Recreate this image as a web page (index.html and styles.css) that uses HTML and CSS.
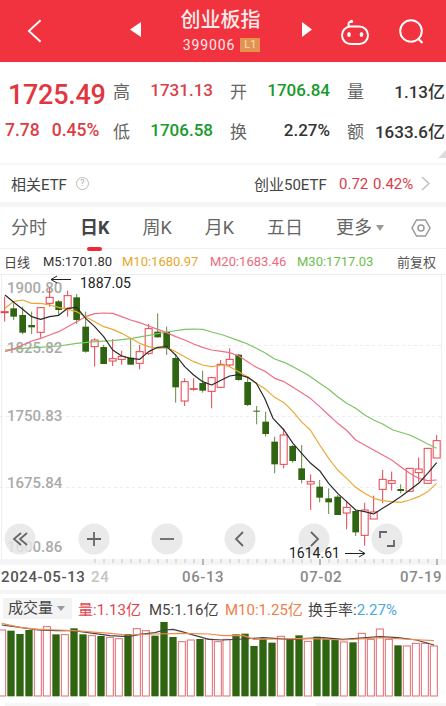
FILE: index.html
```html
<!DOCTYPE html>
<html lang="zh">
<head>
<meta charset="utf-8">
<title>创业板指</title>
<link rel="stylesheet" href="styles.css">
</head>
<body>
<div class="page">
  <header class="top">
    <svg class="back" viewBox="0 0 16 26"><path d="M14.500 1.500 2 13l12.500 11.500"/></svg>
    <svg class="tri-l" viewBox="0 0 11 15"><path d="M11 0v15L0 7.500z"/></svg>
    <div class="title">
      <div class="name">创业板指</div>
      <div class="code">399006<span class="badge">L1</span></div>
    </div>
    <svg class="tri-r" viewBox="0 0 10 15"><path d="M0 0v15L10 7.500z"/></svg>
    <svg class="robot" viewBox="0 0 28 26"><path class="ln" d="M8 7.500C7 4.500 7.500 2.800 10 2.400"/><circle class="dot" cx="10.500" cy="2.400" r="1.700"/><rect class="ln" x="1" y="7.500" width="26" height="17.500" rx="8.700"/><ellipse class="dot" cx="8" cy="15.500" rx="1.800" ry="2.600"/><ellipse class="dot" cx="20.500" cy="15.500" rx="1.800" ry="2.600"/></svg>
    <svg class="search" viewBox="0 0 25 25"><circle class="ln" cx="12" cy="12" r="10.800"/><path class="ln" d="M19.500 20l4 4"/></svg>
  </header>

  <section class="stats">
    <div class="quote">
      <div class="price">1725.49</div>
      <div class="chg"><span>7.78</span><span>0.45%</span></div>
    </div>
    <div class="cells">
      <div class="cell"><span class="k">高</span><span class="red">1731.13</span></div>
      <div class="cell"><span class="k">开</span><span class="green">1706.84</span></div>
      <div class="cell"><span class="k">量</span><span class="dark">1.13亿</span></div>
      <div class="cell"><span class="k">低</span><span class="green">1706.58</span></div>
      <div class="cell"><span class="k">换</span><span class="dark">2.27%</span></div>
      <div class="cell"><span class="k">额</span><span class="dark">1633.6亿</span></div>
    </div>
    <span class="corner"></span>
  </section>

  <section class="etf">
    <span class="etf-label">相关ETF</span>
    <span class="help">?</span>
    <span class="etf-name">创业50ETF</span>
    <span class="etf-a">0.72</span>
    <span class="etf-b">0.42%</span>
    <svg class="chev" viewBox="0 0 9 15"><path d="M1 1l7 6.500-7 6.500"/></svg>
  </section>

  <nav class="tabs">
    <span class="tab">分时</span>
    <span class="tab on">日K</span>
    <span class="tab">周K</span>
    <span class="tab">月K</span>
    <span class="tab">五日</span>
    <span class="tab more">更多<i class="down-tri"></i></span>
    <svg class="hex" viewBox="0 0 20 20"><path d="M5.500 2h9l4.500 8-4.500 8h-9L1 10z"/><circle cx="10" cy="10" r="3"/></svg>
  </nav>

  <div class="legend">
    <span class="lg-a">日线</span>
    <span class="lg-b">M5:1701.80</span>
    <span class="lg-c">M10:1680.97</span>
    <span class="lg-d">M20:1683.46</span>
    <span class="lg-e">M30:1717.03</span>
    <span class="lg-f">前复权</span>
  </div>

  <svg class="chart" viewBox="0 274 446 316">
    <path class="frame" d="M0 274.500H446M1.500 274V559M441.500 274V559"/>
    <path class="grid" d="M0 345.500H441M0 416.500H441M0 487.500H441"/>
    <rect class="axisband" x="0" y="559" width="446" height="6"/>
    <path class="tick" d="M95 559v4M104 559v4M113 559v4M122 559v4M131 559v4M140 559v4M149 559v4M158 559v4M167 559v4M176 559v4M185 559v4M194 559v4M212 559v4M221 559v4M230 559v4M239 559v4M248 559v4M257 559v4M266 559v4M275 559v4M284 559v4M293 559v4M302 559v4M311 559v4M329 559v4M338 559v4M347 559v4M356 559v4M365 559v4M374 559v4M383 559v4M392 559v4M401 559v4M410 559v4M419 559v4M428 559v4"/>
    <path class="tick long" d="M203 559v6M320 559v6M437 559v6"/>

    <text class="ylab" x="7" y="292.500">1900.80</text>
    <text class="ylab" x="7" y="352.500">1825.82</text>
    <text class="ylab" x="7" y="420.500">1750.83</text>
    <text class="ylab" x="7" y="488">1675.84</text>
    <text class="ylab" x="7" y="552">1600.86</text>

    <g transform="translate(0 270) scale(.33333)">
      <g class="up">
        <path d="M14 80V155"/><rect x="3.500" y="125" width="21" height="3"/>
        <path d="M122 113V203"/><rect x="111.500" y="113" width="21" height="74"/>
        <path d="M149 52V110"/><rect x="138.500" y="82" width="21" height="18"/>
        <path d="M203 62V140"/><rect x="192.500" y="77" width="21" height="38"/>
        <path d="M284 205V290"/><rect x="273.500" y="210" width="21" height="20"/>
        <path d="M338 207V288"/><rect x="327.500" y="266" width="21" height="7"/>
        <path d="M365 242V284"/><rect x="354.500" y="259" width="21" height="9"/>
        <path d="M419 225V298"/><rect x="408.500" y="245" width="21" height="35"/>
        <path d="M446 162V255"/><rect x="435.500" y="176" width="21" height="74"/>
        <path d="M554 325V408"/><rect x="543.500" y="335" width="21" height="58"/>
        <path d="M581 325V362"/><rect x="570.500" y="356" width="21" height="2"/>
        <path d="M635 320V415"/><rect x="624.500" y="323" width="21" height="41"/>
        <path d="M662 270V352"/><rect x="651.500" y="283" width="21" height="69"/>
      </g>
      <g class="dn">
        <path d="M41 100V150"/><rect x="31" y="115" width="20" height="25"/>
        <path d="M68 110V192"/><rect x="58" y="135" width="20" height="53"/>
        <path d="M95 125V192"/><rect x="85" y="165" width="20" height="7"/>
        <path d="M176 90V135"/><rect x="166" y="94" width="20" height="26"/>
        <path d="M230 72V162"/><rect x="220" y="82" width="20" height="68"/>
        <path d="M257 125V248"/><rect x="247" y="170" width="20" height="75"/>
        <path d="M311 225V282"/><rect x="301" y="231" width="20" height="51"/>
        <path d="M392 205V284"/><rect x="382" y="263" width="20" height="21"/>
        <path d="M473 130V203"/><rect x="463" y="185" width="20" height="17"/>
        <path d="M500 170V255"/><rect x="490" y="186" width="20" height="49"/>
        <path d="M527 252V398"/><rect x="517" y="264" width="20" height="88"/>
        <path d="M608 302V368"/><rect x="598" y="339" width="20" height="23"/>
      </g>
    </g>
    <g transform="translate(223 270) scale(.33333)">
      <g class="up">
        <path d="M20 235V290"/><rect x="9.500" y="268" width="21" height="17"/>
      </g>
      <g class="dn">
        <path d="M47 252V332"/><rect x="37" y="254" width="20" height="76"/>
        <path d="M74 320V408"/><rect x="64" y="336" width="20" height="69"/>
        <path d="M101 408V463"/><rect x="91" y="422" width="20" height="3"/>
      </g>
    </g>
    <g transform="translate(223 430) scale(.33333)">
      <g class="up">
        <path d="M182 -5V115"/><rect x="171.500" y="15" width="21" height="88"/>
        <path d="M263 133V240"/><rect x="252.500" y="155" width="21" height="7"/>
        <path d="M371 212V298"/><rect x="360.500" y="232" width="21" height="17"/>
        <path d="M425 218V347"/><rect x="414.500" y="240" width="21" height="76"/>
        <path d="M452 197V267"/><rect x="441.500" y="246" width="21" height="21"/>
        <path d="M479 120V220"/><rect x="468.500" y="148" width="21" height="30"/>
        <path d="M506 125V182"/><rect x="495.500" y="152" width="21" height="8"/>
        <path d="M560 115V184"/><rect x="549.500" y="115" width="21" height="69"/>
        <path d="M587 83V155"/><rect x="576.500" y="117" width="21" height="11"/>
        <path d="M614 55V160"/><rect x="603.500" y="55" width="21" height="105"/>
        <path d="M641 15V84"/><rect x="630.500" y="32" width="21" height="52"/>
      </g>
      <g class="dn">
        <path d="M128 -55V20"/><rect x="118" y="-25" width="20" height="37"/>
        <path d="M155 20V130"/><rect x="145" y="35" width="20" height="68"/>
        <path d="M209 45V98"/><rect x="199" y="48" width="20" height="45"/>
        <path d="M236 45V160"/><rect x="226" y="115" width="20" height="35"/>
        <path d="M290 150V217"/><rect x="280" y="170" width="20" height="33"/>
        <path d="M317 175V252"/><rect x="307" y="205" width="20" height="12"/>
        <path d="M344 195V255"/><rect x="334" y="200" width="20" height="55"/>
        <path d="M398 240V318"/><rect x="388" y="243" width="20" height="64"/>
        <path d="M533 163V190"/><rect x="523" y="177" width="20" height="6"/>
      </g>
    </g>

    <g class="ma" transform="scale(.33333)">
      <path class="m30" d="M15 1050L68 1045 122 1042 176 1038 230 1030 284 1025 338 1022 392 1016 446 1006 500 996 554 988 581 987 608 988 635 996 669 1005 716 1022 743 1032 769 1045 797 1060 824 1077 852 1087 879 1100 924 1125 959 1150 986 1168 1013 1190 1040 1210 1067 1225 1094 1245 1121 1260 1148 1272 1179 1290 1229 1305 1256 1318 1283 1332 1310 1345"/>
      <path class="m20" d="M15 1055L45 1045 68 1035 95 1023 122 1015 149 1005 176 995 203 980 230 965 257 950 284 941 311 939 338 940 365 950 392 960 419 968 446 978 473 988 500 998 527 1010 554 1020 581 1032 608 1042 635 1050 669 1055 689 1058 716 1068 743 1085 769 1102 797 1115 824 1135 852 1145 879 1162 931 1195 959 1220 986 1245 1013 1270 1039 1290 1067 1320 1121 1350 1148 1365 1175 1380 1202 1400 1229 1420 1256 1435 1283 1442 1310 1440"/>
      <path class="m10" d="M15 925L40 905 68 900 95 910 122 910 149 915 176 922 203 928 230 935 257 950 284 965 311 980 338 988 365 1000 392 1015 419 1030 446 1040 473 1045 500 1042 527 1055 554 1070 581 1085 608 1095 635 1100 669 1095 689 1100 716 1115 743 1130 769 1150 797 1168 824 1192 852 1208 879 1235 904 1265 931 1290 959 1335 986 1375 1013 1410 1040 1435 1067 1462 1094 1480 1121 1495 1148 1502 1175 1505 1202 1507 1229 1500 1256 1490 1283 1475 1310 1450"/>
      <path class="m5" d="M15 885L45 910 68 928 95 950 122 958 149 950 176 946 203 925 230 922 257 955 284 980 311 1010 338 1050 365 1068 392 1075 419 1078 446 1055 473 1042 500 1040 527 1065 554 1100 581 1125 608 1145 635 1155 669 1138 689 1128 716 1124 743 1132 769 1150 794 1195 819 1255 852 1290 879 1330 905 1360 932 1390 959 1412 986 1450 1013 1480 1040 1505 1067 1530 1094 1535 1121 1542 1148 1525 1175 1508 1202 1490 1229 1470 1256 1450 1283 1420 1310 1388"/>
    </g>

    <g class="btns">
      <circle cx="20" cy="539" r="15.500"/><circle cx="94" cy="539" r="15.500"/><circle cx="167" cy="539" r="15.500"/>
      <circle cx="240" cy="539" r="15.500"/><circle cx="314" cy="539" r="15.500"/><circle cx="387" cy="539" r="15.500"/>
    </g>
    <g class="btn-ico">
      <path d="M21 533l-7 6 7 6M27 533l-7 6 7 6"/>
      <path d="M87 539H101M94 532V546"/>
      <path d="M160 539H174"/>
      <path d="M243 532l-7 7 7 7"/>
      <path d="M311 532l7 7-7 7"/>
      <path d="M380 538v-6h7M394 540v6h-7"/>
    </g>

    <g class="note">
      <text x="80" y="288">1887.05</text>
      <text x="289" y="558">1614.61</text>
    </g>
    <path class="arrow" d="M71 279.500H51M57 276l-6 3.500 6 3.500"/>
    <path class="arrow" d="M345 553.500H365M359 550l6 3.500-6 3.500"/>

    <text class="date strong" x="1" y="582">2024-05-13</text>
    <text class="date faint" x="91" y="582">24</text>
    <text class="date" x="182" y="582">06-13</text>
    <text class="date" x="300" y="582">07-02</text>
    <text class="date" x="400" y="582">07-19</text>
  </svg>

  <div class="volhead">
    <span class="volbtn">成交量<i class="down-tri small"></i></span>
    <span class="v-a">量:1.13亿</span>
    <span class="v-b">M5:1.16亿</span>
    <span class="v-c">M10:1.25亿</span>
    <span class="v-d">换手率:<b>2.27%</b></span>
  </div>

  <svg class="vol" viewBox="0 622 446 78">
    <g transform="translate(0 590) scale(.33333)">
      <g class="vup">
        <rect x="-4" y="120" width="21" height="198"/><rect x="103" y="118" width="21" height="200"/><rect x="130" y="110" width="21" height="208"/><rect x="184" y="134" width="21" height="184"/><rect x="265" y="137" width="21" height="181"/><rect x="319" y="142" width="21" height="176"/><rect x="346" y="146" width="21" height="172"/><rect x="400" y="116" width="21" height="202"/><rect x="427" y="122" width="21" height="196"/><rect x="535" y="155" width="21" height="163"/><rect x="562" y="150" width="21" height="168"/><rect x="616" y="147" width="21" height="171"/><rect x="643" y="155" width="21" height="163"/>
      </g>
      <g class="vdn">
        <rect x="22" y="122" width="22" height="197"/><rect x="49" y="132" width="22" height="187"/><rect x="76" y="120" width="22" height="199"/><rect x="157" y="133" width="22" height="186"/><rect x="211" y="115" width="22" height="204"/><rect x="238" y="133" width="22" height="186"/><rect x="292" y="138" width="22" height="181"/><rect x="373" y="132" width="22" height="187"/><rect x="454" y="137" width="22" height="182"/><rect x="481" y="91" width="22" height="228"/><rect x="508" y="141" width="22" height="178"/><rect x="589" y="147" width="22" height="172"/>
      </g>
    </g>
    <g transform="translate(223 590) scale(.33333)">
      <g class="vup">
        <rect x="0" y="148" width="21" height="170"/><rect x="163" y="139" width="21" height="179"/><rect x="244" y="154" width="21" height="164"/><rect x="352" y="156" width="21" height="162"/><rect x="406" y="130" width="21" height="188"/><rect x="433" y="148" width="21" height="170"/><rect x="460" y="117" width="21" height="201"/><rect x="487" y="148" width="21" height="170"/><rect x="541" y="168" width="21" height="150"/><rect x="568" y="160" width="21" height="158"/><rect x="595" y="160" width="21" height="158"/><rect x="622" y="168" width="21" height="150"/>
      </g>
      <g class="vdn">
        <rect x="28" y="133" width="22" height="186"/><rect x="55" y="131" width="22" height="188"/><rect x="82" y="168" width="22" height="151"/><rect x="109" y="146" width="22" height="173"/><rect x="136" y="158" width="22" height="161"/><rect x="190" y="148" width="22" height="171"/><rect x="217" y="136" width="22" height="183"/><rect x="271" y="140" width="22" height="179"/><rect x="298" y="146" width="22" height="173"/><rect x="325" y="148" width="22" height="171"/><rect x="379" y="157" width="22" height="162"/><rect x="514" y="166" width="22" height="153"/>
      </g>
    </g>
    <g class="ma" transform="translate(0 590) scale(.33333)">
      <path class="vm5" d="M5 105L60 112 114 120 170 122 222 122 280 130 330 137 384 140 420 133 465 128 492 120 519 118 546 125 573 133 627 148 669 150 729 147 789 143 870 148 969 143 1029 148 1140 140 1194 143 1249 150 1302 165"/>
      <path class="vm10" d="M5 100L60 112 114 118 170 120 222 122 330 130 384 135 465 132 546 130 627 132 669 137 729 136 762 148 839 147 919 145 1029 150 1140 143 1209 147 1302 152"/>
    </g>
  </svg>

  <footer class="foot"><span class="foot-a"></span><span class="foot-b"></span></footer>
</div>
</body>
</html>
```
FILE: styles.css
```css
* { box-sizing: border-box; }
html, body { margin: 0; padding: 0; background: #fff; }
body { font-family: Roboto, "Noto Sans CJK SC", sans-serif; color: #333; }
.page { width: 446px; height: 706px; overflow: hidden; }

.top { height: 62px; background: #f1323f; display: flex; align-items: center; padding-left: 27px; }
.top svg { flex: none; display: block; }
.back { width: 15px; height: 26px; margin-top: -1px; }
.back path { fill: none; stroke: #fff; stroke-width: 2; }
.tri-l { width: 11px; height: 15px; margin-left: 88px; margin-top: -3px; fill: #fff; }
.tri-r { width: 10px; height: 15px; margin-top: -3px; fill: #fff; }
.title { width: 161px; text-align: center; color: #fff; }
.name { font-size: 20px; line-height: 26px; font-weight: 500; color: #fdeaea; margin-top: -2px; margin-left: -2px; }
.code { font-size: 14px; line-height: 18px; letter-spacing: .9px; margin-top: 3px; display: flex; justify-content: center; align-items: center; color: #fde8e8; }
.badge { margin-left: 5px; width: 20px; height: 14px; line-height: 14px; background: #e3924f; color: #f9dcc0; font-size: 11px; letter-spacing: 0; text-align: center; }
.robot { width: 28px; height: 26px; margin-left: 29px; margin-top: 1px; }
.search { width: 25px; height: 25px; margin-left: 30px; }
.ln { fill: none; stroke: #fff; stroke-width: 2; }
.dot { fill: #fff; }

.stats { height: 101px; display: flex; padding-top: 14px; position: relative; }
.quote { width: 113px; flex: none; }
.price { font-size: 27px; line-height: 28px; margin-top: 5px; font-weight: 500; color: #e2363f; padding-left: 8px; letter-spacing: -.3px; }
.chg { display: flex; gap: 12px; padding-left: 5px; margin-top: 10px; font-size: 17.500px; line-height: 22px; color: #dd3c44; font-weight: 500; }
.cells { display: grid; grid-template-columns: 100px 100px 98px; column-gap: 17px; grid-auto-rows: 40px; flex: none; }
.cell { display: flex; justify-content: space-between; align-items: center; height: 28px; font-size: 17px; font-weight: 500; white-space: nowrap; }
.k { font-size: 17px; font-weight: 400; color: #666; }
.red { color: #d9404a; }
.green { color: #169a2c; }
.dark { color: #333; }
.corner { position: absolute; right: 0; top: 88px; width: 0; height: 0; border-left: 8px solid transparent; border-bottom: 8px solid #dcdcdc; }

.etf { height: 39px; border-top: 2px solid #f6f6f6; display: flex; align-items: center; padding-left: 11px; font-size: 15px; color: #444; white-space: nowrap; }
.etf-label { width: 58px; }
.help { width: 13px; height: 13px; margin-left: 7px; border: 1px solid #bbb; border-radius: 50%; font-size: 9px; line-height: 11px; text-align: center; color: #aaa; }
.etf-name { margin-left: 165px; width: 74px; }
.etf-a { margin-left: 11px; color: #d9404a; width: 27px; }
.etf-b { margin-left: 7px; color: #d9404a; width: 38px; }
.chev { width: 9px; height: 15px; margin-left: 10px; }
.chev path { fill: none; stroke: #bbb; stroke-width: 1.300; }

.tabs { height: 47px; border-top: 5px solid #f5f5f5; border-bottom: 1px solid #f0f0f0; display: flex; align-items: center; gap: 33px; padding-left: 11px; position: relative; font-size: 18px; color: #666; white-space: nowrap; }
.tab { position: relative; line-height: 26px; }
.tab.on { font-weight: 700; color: #444; }
.tab.on::after { content: ""; position: absolute; left: 7px; top: 32px; width: 15px; height: 4px; border-radius: 2px; background: #ee2a36; }
.more { display: flex; align-items: center; }
.down-tri { display: inline-block; width: 0; height: 0; margin-left: 4px; border-left: 4.500px solid transparent; border-right: 4.500px solid transparent; border-top: 6px solid #999; }
.hex { position: absolute; left: 411px; top: 11px; width: 20px; height: 20px; }
.hex path, .hex circle { fill: none; stroke: #999; stroke-width: 1.500; }

.legend { height: 25px; display: flex; align-items: center; padding-left: 4px; font-size: 13px; white-space: nowrap; }
.lg-a { width: 27px; color: #444; }
.lg-b { margin-left: 12px; width: 68px; color: #333; }
.lg-c { margin-left: 11px; width: 76px; color: #e8a82e; }
.lg-d { margin-left: 12px; width: 76px; color: #ee6a7e; }
.lg-e { margin-left: 11px; width: 76px; color: #6cc04a; }
.lg-f { margin-left: 24px; color: #555; }

.chart { display: block; width: 446px; height: 316px; }
.frame { fill: none; stroke: #eeeeee; stroke-width: 1; }
.grid { fill: none; stroke: #ececec; stroke-width: 1; stroke-dasharray: 3 3; }
.axisband { fill: #f5f5f5; }
.tick { fill: none; stroke: #c4c4c4; stroke-width: 1; }
.tick.long { stroke: #777; }
.ylab { font-size: 15px; fill: #aaaaaa; font-weight: 500; }
.up path { stroke: #e8414c; stroke-width: 3; fill: none; }
.up rect { stroke: #e8414c; stroke-width: 3; fill: #fff; }
.dn path { stroke: #5f8a48; stroke-width: 3; fill: none; }
.dn rect { fill: #2f6410; }
.ma path { fill: none; stroke-width: 3.600; stroke-linejoin: round; }
.m5 { stroke: #2a2a2a; }
.m10 { stroke: #eaa934; }
.m20 { stroke: #ee6f85; }
.m30 { stroke: #7cc464; }
.note text { font-size: 14px; fill: #222; }
.arrow { fill: none; stroke: #222; stroke-width: 1; }
.btns circle { fill: #e6e6e6; fill-opacity: .85; }
.btn-ico path { fill: none; stroke: #666; stroke-width: 1.800; }
.date { font-size: 15px; fill: #8a8a8a; letter-spacing: .6px; font-weight: 500; }
.date.strong { fill: #555; }
.date.faint { fill: #c4c4c4; }

.volhead { height: 32px; border-top: 4px solid #f5f5f5; display: flex; align-items: center; padding-left: 3px; font-size: 15px; white-space: nowrap; }
.volbtn { width: 69px; height: 21px; line-height: 21px; background: #f3f3f3; border-radius: 2px; padding-left: 5px; color: #444; display: flex; align-items: center; }
.volbtn .small { margin-left: 4px; border-left-width: 4px; border-right-width: 4px; border-top-width: 5px; }
.v-a { margin-left: 6px; width: 62px; color: #e2454e; }
.v-b { margin-left: 9px; width: 67px; color: #444; }
.v-c { margin-left: 9px; width: 75px; color: #f07d4a; }
.v-d { margin-left: 8px; color: #444; }
.v-d b { font-weight: 400; color: #4aa8e0; }

.vol { display: block; width: 446px; height: 78px; }
.vup rect { fill: #fff; stroke: #e06a72; stroke-width: 3; }
.vdn rect { fill: #2f6410; }
.vm5 { stroke: #444; stroke-width: 2.500; }
.vm10 { stroke: #f08a4c; stroke-width: 3; }
.foot { height: 6px; display: flex; padding-top: 3px; padding-left: 5px; }
.foot-a { width: 85px; height: 3px; background: #f6f6f6; }
.foot-b { width: 130px; height: 3px; margin-left: 226px; background: #f6f6f6; }
```
